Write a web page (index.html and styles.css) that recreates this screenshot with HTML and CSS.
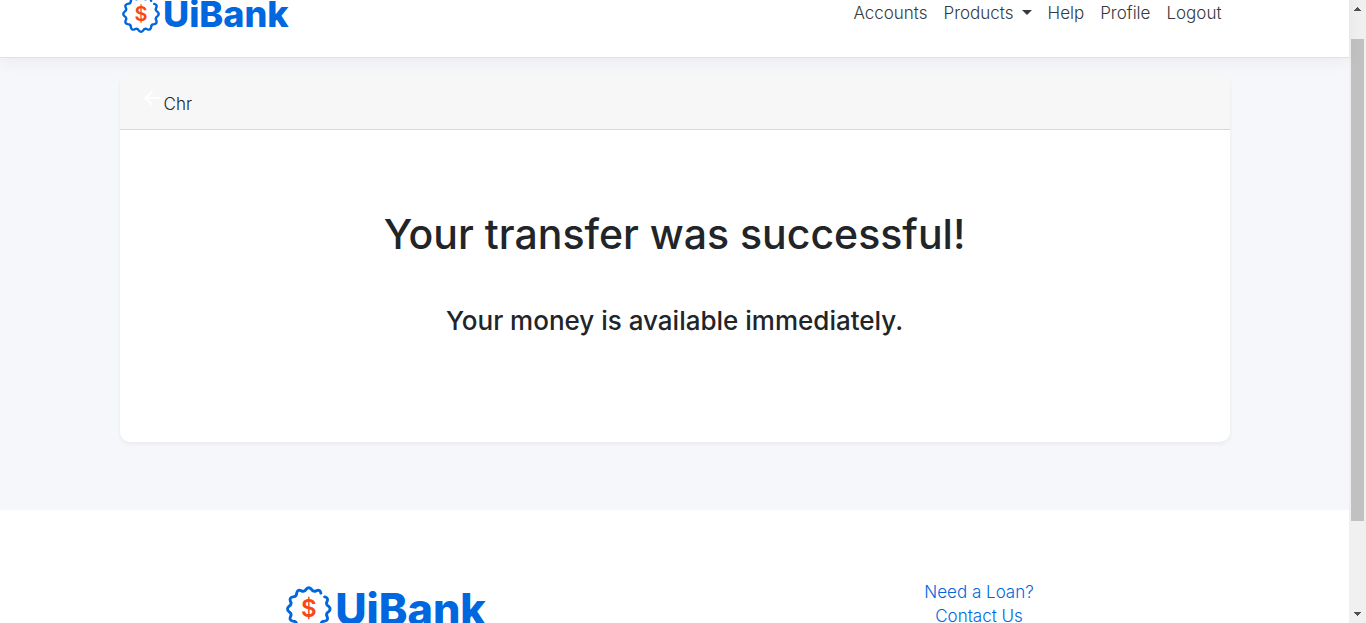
FILE: index.html
```html
<!DOCTYPE html>
<html lang="en">
<head>
<meta charset="utf-8">
<meta name="viewport" content="width=device-width, initial-scale=1">
<title>UiBank</title>
<link rel="stylesheet" href="styles.css">
</head>
<body>
<svg class="defs" aria-hidden="true">
  <symbol id="logo" viewBox="0 0 170 40">
    <path class="logo-ring" transform="translate(19 20)" d="M13.2-10.1Q16.500-9.500 15.300-6.400Q13.800-3.700 16.500-2.200Q19 0 16.500 2.200Q13.800 3.700 15.300 6.400Q16.500 9.500 13.200 10.100Q10.100 10.100 10.100 13.200Q9.500 16.500 6.400 15.300Q3.700 13.800 2.200 16.500Q0 19-2.200 16.500Q-3.700 13.800-6.400 15.300Q-9.500 16.500-10.100 13.200Q-10.100 10.100-13.200 10.100Q-16.500 9.500-15.300 6.400Q-13.800 3.700-16.500 2.200Q-19 0-16.500-2.200Q-13.800-3.700-15.300-6.400Q-16.500-9.500-13.200-10.100Q-10.100-10.100-10.100-13.200Q-9.500-16.500-6.400-15.300Q-3.700-13.800-2.200-16.500Q0-19 2.200-16.500Q3.700-13.800 6.400-15.300Q9.500-16.500 10.100-13.200"/>
    <text class="logo-dollar" x="19" y="27">$</text>
    <text class="logo-word" x="41" y="33">UiBank</text>
  </symbol>
</svg>
<div class="window">
  <div class="page">
    <header class="header">
      <div class="container header-row">
        <a class="brand" href="#" aria-label="UiBank home"><svg class="logo"><use href="#logo"/></svg></a>
        <nav class="nav">
          <a href="#">Accounts</a>
          <button type="button">Products<span class="caret"></span></button>
          <a href="#">Help</a>
          <a href="#">Profile</a>
          <a href="#">Logout</a>
        </nav>
      </div>
    </header>
    <main class="main">
      <div class="container">
        <section class="card">
          <div class="card-header">
            <button class="back" type="button" aria-label="Back">
              <svg viewBox="0 0 16 16"><path d="M16 8H1.5M8.500 1L1.500 8L8.500 15"/></svg>
            </button>
            <span>Chr</span>
          </div>
          <div class="card-body">
            <h1>Your transfer was successful!</h1>
            <h2>Your money is available immediately.</h2>
          </div>
        </section>
      </div>
    </main>
    <footer class="footer">
      <div class="footer-row">
        <svg class="logo logo-large" role="img" aria-label="UiBank"><use href="#logo"/></svg>
        <div class="links">
          <a href="#">Need a Loan?</a>
          <a href="#">Contact Us</a>
        </div>
      </div>
    </footer>
  </div>
  <div class="scrollbar" aria-hidden="true">
    <svg viewBox="0 0 17 17"><path d="M5 11V10H6V9H7V8H8V7H9V8H10V9H11V10H12V11Z"/></svg>
    <div class="track"><div class="thumb"></div></div>
    <svg viewBox="0 0 17 17"><path d="M5 6V7H6V8H7V9H8V10H9V9H10V8H11V7H12V6Z"/></svg>
  </div>
</div>
</body>
</html>
```
FILE: styles.css
```css
* { box-sizing: border-box; }
body {
  margin: 0;
  color: #212529;
  background: #fff;
  font: 300 17px/24px Inter, "Open Sans", sans-serif;
}
.defs { display: none; }
.window {
  display: grid;
  grid-template-columns: minmax(0, 1fr) 17px;
  grid-template-rows: 100%;
  height: 100vh;
  overflow: hidden;
}
.page { margin-top: -28px; }
.container {
  max-width: 1142px;
  margin: 0 auto;
  padding: 0 16px;
}
.header {
  position: relative;
  padding: 22px 0 23px;
  background: #fff;
  border-bottom: 1px solid #dfe0e5;
  box-shadow: 0 4px 16px rgba(0, 0, 0, 0.05);
}
.header-row {
  display: flex;
  align-items: center;
  justify-content: space-between;
}
.brand { display: flex; padding-left: 2px; }
.logo { display: block; width: 170px; height: 40px; }
.logo-large { width: 204px; height: 48px; }
.logo-ring {
  fill: none;
  stroke: #0067df;
  stroke-width: 2.4;
  stroke-linecap: round;
  stroke-linejoin: round;
}
.logo-dollar {
  fill: #fa4616;
  font: 600 20px Inter, sans-serif;
  text-anchor: middle;
}
.logo-word { fill: #0067df; font: 800 36px Inter, sans-serif; }
.nav { display: flex; gap: 16px; padding: 0 8px 2px 0; }
.nav a, .nav button {
  padding: 0;
  border: 0;
  background: none;
  color: #343a40;
  font: inherit;
  text-decoration: none;
}
.caret {
  display: inline-block;
  margin-left: 8px;
  vertical-align: 4px;
  border: 5px solid transparent;
  border-top-color: #343a40;
  border-bottom: 0;
}
.main { padding: 16px 0 68px; background: #f5f7fb; }
.card {
  overflow: hidden;
  background: #fff;
  border-radius: 10px;
  box-shadow: 0 2px 4px rgba(0, 0, 0, 0.06);
}
.card-header {
  display: flex;
  align-items: center;
  gap: 4px;
  padding: 16px 24px 11px;
  background: #f7f7f7;
  border-bottom: 1px solid #d8d8d8;
}
.back {
  padding: 0 0 12px;
  border: 0;
  background: none;
}
.back svg {
  display: block;
  width: 16px;
  height: 16px;
  fill: none;
  stroke: #fff;
  stroke-width: 2;
}
.card-body { padding: 80px 20px 106px; text-align: center; }
h1 { margin: 0 0 48px; font-weight: 500; font-size: 41px; line-height: 48px; }
h2 { margin: 0; font-weight: 500; font-size: 26px; line-height: 30px; }
.footer { padding: 70px 0 48px; background: #fff; }
.footer-row {
  display: grid;
  grid-template-columns: 1fr 1fr;
  justify-items: center;
  max-width: 1200px;
  margin: 0 auto;
  padding-left: 18px;
}
.footer-row .logo { margin-top: 5px; }
.links { display: flex; flex-direction: column; align-items: center; }
.links a { color: #0067df; text-decoration: none; }
.scrollbar { display: flex; flex-direction: column; background: #f0f0f0; }
.scrollbar svg { display: block; flex: none; width: 17px; height: 17px; fill: #505050; }
.track { flex: 1; padding: 22px 2px 0; }
.thumb { height: 85%; background: #c1c1c1; }
```
